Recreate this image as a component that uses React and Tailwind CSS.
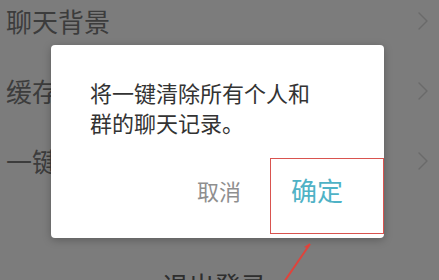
import React from 'react';

const rows = ['聊天背景', '缓存清理', '一键清空聊天记录'];

function Chevron() {
  return (
    <svg width="12" height="20" viewBox="0 0 12 20" fill="none">
      <path d="M2 2l8 8-8 8" stroke="#6a6a6a" strokeWidth="1.4" strokeLinecap="round" strokeLinejoin="round" />
    </svg>
  );
}

export default function App() {
  const font = { fontFamily: '"Noto Sans CJK SC", "Noto Sans", sans-serif' };

  return (
    <div className="relative w-[439px] h-[280px] overflow-hidden bg-[#7c7c7c]" style={font}>
      <div className="mt-[-14px]">
        {rows.map((label) => (
          <div key={label} className="flex items-center justify-between h-[70px] pl-[6px] pr-[10px]">
            <span className="text-[26px] leading-[30px] text-[#3c3c3c] whitespace-nowrap">{label}</span>
            <Chevron />
          </div>
        ))}
        <div className="flex justify-center pt-[74px] pr-[10px]">
          <span className="text-[26px] leading-[30px] text-[#2e2e2e]">退出登录</span>
        </div>
      </div>

      <div className="absolute left-[51px] top-[45px] w-[333px] h-[193px] bg-white rounded-[4px] shadow-[0_2px_8px_rgba(0,0,0,0.25)] flex flex-col">
        <p className="pt-[32px] pl-[39px] pr-[60px] text-[22px] leading-[30px] text-[#333333]">
          将一键清除所有个人和
          <br />
          群的聊天记录。
        </p>
        <div className="mt-auto mb-[33px] flex items-center justify-end pr-[41px] gap-[50px]">
          <span className="text-[22px] leading-[30px] text-[#8f8f8f]">取消</span>
          <span className="text-[26px] leading-[30px] text-[#4fb2c6]">确定</span>
        </div>
      </div>

      <div className="absolute left-[270px] top-[158px] w-[114px] h-[76px] border-[1.5px] border-[#d9534f]" />

      <svg className="absolute left-0 top-0" width="439" height="280" viewBox="0 0 439 280">
        <line x1="310" y1="244" x2="284" y2="282" stroke="#e0433b" strokeWidth="2" />
        <path d="M310 243l-6 4 3 1z" fill="#e0433b" />
      </svg>
    </div>
  );
}
